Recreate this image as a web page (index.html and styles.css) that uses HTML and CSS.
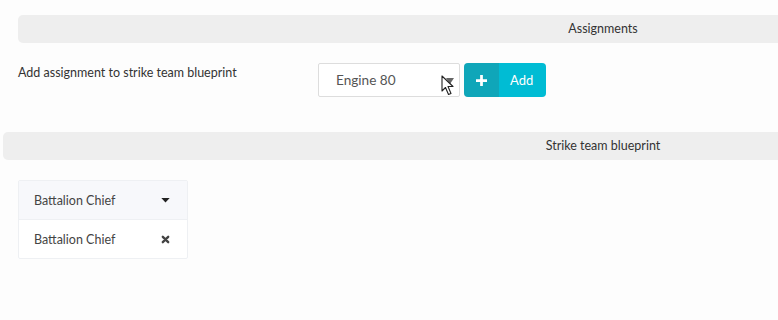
FILE: index.html
```html
<!DOCTYPE html>
<html lang="en">
<head>
    <meta charset="UTF-8">
    <meta name="viewport" content="width=device-width, initial-scale=1.0">
    <title>Strike Team Blueprint</title>
    <link rel="stylesheet" href="styles.css">
</head>
<body>
    <main class="page">
        <!-- Assignments -->
        <section class="assignments">
            <div class="section-bar">Assignments</div>
            <div class="add-row">
                <label class="add-label" for="assignment">Add assignment to strike team blueprint</label>
                <div class="add-controls">
                    <div class="select-wrap">
                        <select id="assignment" class="select">
                            <option>Engine 80</option>
                        </select>
                        <span class="select-arrow"></span>
                        <svg class="cursor" width="14" height="21" viewBox="0 0 14 21">
                            <path d="M1 1 L1 16 L4.5 12.5 L7.5 19.5 L10 18.5 L7 11.5 L12 11.5 Z" fill="#fff" stroke="#222" stroke-width="1.1" stroke-linejoin="round"/>
                        </svg>
                    </div>
                    <button type="button" class="button-add">
                        <span class="button-icon">
                            <svg width="11" height="11" viewBox="0 0 12 12"><path d="M4.5 0h3v4.5H12v3H7.5V12h-3V7.5H0v-3h4.5z" fill="#fff"/></svg>
                        </span>
                        <span class="button-text">Add</span>
                    </button>
                </div>
            </div>
        </section>

        <!-- Blueprint -->
        <section class="blueprint">
            <div class="section-bar wide">Strike team blueprint</div>
            <div class="card">
                <div class="card-head">
                    <span>Battalion Chief</span>
                    <svg width="9" height="5" viewBox="0 0 10 6"><path d="M0 0h10L5 5.5z" fill="#222"/></svg>
                </div>
                <div class="card-row">
                    <span>Battalion Chief</span>
                    <svg width="9" height="9" viewBox="0 0 10 10"><path d="M2 2l6 6M8 2l-6 6" stroke="#444" stroke-width="2.6" stroke-linecap="round"/></svg>
                </div>
            </div>
        </section>
    </main>
</body>
</html>
```

FILE: styles.css
```css
html, body {
    margin: 0;
    padding: 0;
    overflow: hidden;
}

body {
    font-family: "Lato", "Open Sans", sans-serif;
    font-size: 12.5px;
    color: #333;
    background-color: #fdfdfd;
}

.page {
    width: 1220px;
    padding-top: 15px;
}

.assignments {
    margin-left: 18px;
    width: 1170px;
}

.section-bar {
    height: 28px;
    line-height: 28px;
    text-align: center;
    background-color: #eeeeee;
    border-radius: 5px;
    color: #333;
}

.add-row {
    display: flex;
    padding-top: 20px;
}

.add-label {
    width: 300px;
    padding-top: 2px;
}

.add-controls {
    display: flex;
    gap: 4px;
}

.select-wrap {
    position: relative;
}

.select {
    appearance: none;
    -webkit-appearance: none;
    width: 142px;
    height: 34px;
    padding: 0 0 0 17px;
    border: 1px solid #dddddd;
    border-radius: 2px;
    background-color: #fff;
    font-family: inherit;
    font-size: 13.6px;
    color: #555;
    outline: none;
}

.select-arrow {
    position: absolute;
    right: 6px;
    top: 15px;
    width: 0;
    height: 0;
    border-left: 4px solid transparent;
    border-right: 4px solid transparent;
    border-top: 6px solid #666;
}

.cursor {
    position: absolute;
    left: 123px;
    top: 12px;
}

.button-add {
    display: flex;
    height: 34px;
    padding: 0;
    border: none;
    border-radius: 4px;
    overflow: hidden;
    font-family: inherit;
    font-size: 13px;
    color: #fff;
    cursor: pointer;
}

.button-icon {
    display: flex;
    align-items: center;
    justify-content: center;
    width: 35px;
    background-color: #0fa6b9;
}

.button-text {
    display: flex;
    align-items: center;
    padding: 0 13px 0 11px;
    background-color: #00bcd4;
}

.blueprint {
    margin-top: 35px;
    margin-left: 3px;
    width: 1200px;
}

.card {
    width: 168px;
    margin: 20px 0 0 15px;
    border: 1px solid #eef0f3;
    border-radius: 2px;
    background-color: #fff;
    color: #444;
}

.card-head,
.card-row {
    display: flex;
    align-items: center;
    justify-content: space-between;
    height: 38px;
    padding: 0 17px 0 15px;
}

.card-head {
    background-color: #f7f8fb;
    border-bottom: 1px solid #eef0f3;
}
```
